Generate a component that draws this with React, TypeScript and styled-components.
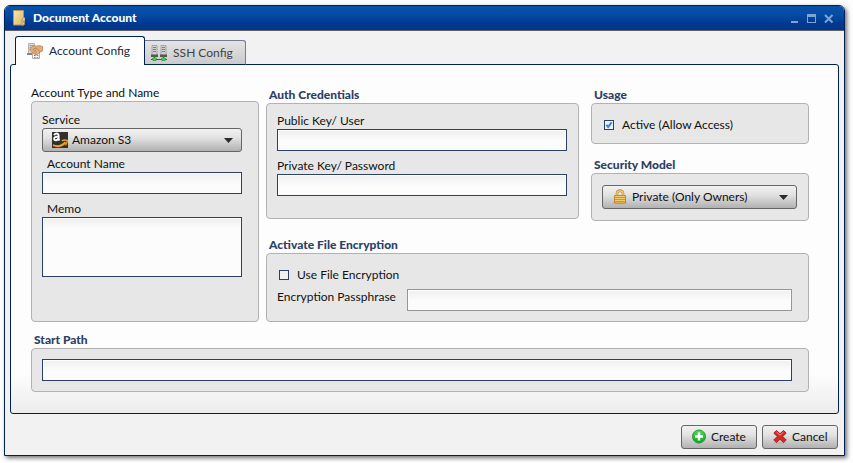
import React, { useState } from 'react';
import styled, { createGlobalStyle, css } from 'styled-components';

const navy = '#001f52';
const slate = '#2c4066';

const GlobalStyle = createGlobalStyle`
  * { box-sizing: border-box; }
  body {
    margin: 0;
    background: #fdfdfd;
    color: #111;
    font: 12px/16px Lato, "Noto Sans", sans-serif;
  }
  button, input, select, textarea { font: inherit; color: inherit; margin: 0; }
`;

const Page = styled.div`
  padding: 5px 8px 6px 4px;
`;

const Dialog = styled.main`
  border: 1px solid ${navy};
  border-radius: 6px 6px 0 0;
  background: #f2f2f2;
  box-shadow: 2px 2px 4px rgba(0, 0, 0, 0.55);
`;

const TitleBar = styled.header`
  display: flex;
  align-items: center;
  gap: 6px;
  height: 25px;
  padding: 0 9px 0 6px;
  border-bottom: 1px solid #5d6266;
  border-radius: 5px 5px 0 0;
  background: linear-gradient(#0850a8 0%, #054ca6 35%, #003a91 70%, #003489 100%);
`;

const Title = styled.h1`
  flex: 1;
  margin: 0;
  color: #fff;
  font-size: 12px;
  line-height: 16px;
  font-weight: 900;
`;

const WindowControls = styled.div`
  display: flex;
  gap: 5px;
`;

const WindowButton = styled.button`
  display: flex;
  width: 12px;
  height: 12px;
  padding: 0;
  border: 0;
  background: none;
  color: #83a3d3;
`;

const TabList = styled.div`
  display: flex;
  align-items: flex-end;
  padding: 5px 10px 0;
`;

const Tab = styled.button<{ $active?: boolean }>`
  display: flex;
  align-items: center;
  gap: 6px;
  height: 25px;
  padding: 0 12px 0 6px;
  border: 1px solid #747b92;
  border-left: 0;
  border-bottom-color: ${navy};
  border-radius: 0 3px 0 0;
  background: linear-gradient(#e3e3e3, #cbcbcb);
  color: #3d3f4b;
  ${(p) =>
    p.$active &&
    css`
      position: relative;
      z-index: 1;
      height: 29px;
      padding: 0 14px 0 11px;
      border: solid ${navy};
      border-width: 1px 1px 0;
      border-radius: 3px 3px 0 0;
      background: #fdfdfd;
      color: #222b40;
    `}
`;

const TabPanel = styled.div`
  display: flex;
  flex-direction: column;
  gap: 10px;
  margin: -1px 5px 0;
  padding: 20px 29px 21px 20px;
  border: 1px solid ${navy};
  border-radius: 3px;
  background: linear-gradient(#fdfdfd calc(100% - 40px), #ececec);
`;

const Columns = styled.div`
  display: grid;
  grid-template-columns: 228fr 543fr;
  gap: 7px;
`;

const Stack = styled.div<{ $gap: number; $top?: number }>`
  display: flex;
  flex-direction: column;
  gap: ${(p) => p.$gap}px;
  padding-top: ${(p) => p.$top ?? 0}px;
`;

const AccessRow = styled.div`
  display: grid;
  grid-template-columns: 313fr 218fr;
  align-items: start;
  gap: 12px;
`;

const Section = styled.section`
  display: flex;
  flex-direction: column;
`;

const SectionTitle = styled.h2<{ $plain?: boolean }>`
  margin: 0;
  padding-left: ${(p) => (p.$plain ? 0 : 3)}px;
  color: ${(p) => (p.$plain ? '#111' : slate)};
  font-size: 12px;
  line-height: 16px;
  font-weight: ${(p) => (p.$plain ? 400 : 900)};
`;

const Box = styled.div<{ $pad: string; $gap?: number }>`
  flex: 1;
  display: flex;
  flex-direction: column;
  gap: ${(p) => p.$gap ?? 0}px;
  padding: ${(p) => p.$pad};
  border: 1px solid #b2b2b2;
  border-radius: 4px;
  background: #e7e7e7;
`;

const Field = styled.div`
  display: flex;
  flex-direction: column;
`;

const FieldLabel = styled.label<{ $indent?: boolean }>`
  padding-left: ${(p) => (p.$indent ? 5 : 0)}px;
`;

const entry = css`
  width: 100%;
  border: 1px solid ${slate};
  border-radius: 0;
  outline: 0;
  background: linear-gradient(#efefef, #fcfcfc 11px);
  box-shadow: inset 0 0 0 1px #fdfdfd;
`;

const TextInput = styled.input<{ $muted?: boolean }>`
  ${entry}
  height: 22px;
  padding: 0 4px;
  ${(p) => p.$muted && css`border-color: #969696;`}
`;

const TextArea = styled.textarea`
  ${entry}
  height: 60px;
  padding: 2px 4px;
  resize: none;
`;

const InlineField = styled.div`
  display: flex;
  align-items: flex-start;
  gap: 11px;
`;

const CheckLabel = styled.label`
  display: flex;
  align-items: center;
  gap: 8px;
`;

const Checkbox = styled.input`
  appearance: none;
  width: 10px;
  height: 10px;
  margin-left: 2px;
  border: 1px solid ${slate};
  background: #f0f0f0;
  &:checked {
    background: #f0f0f0
      url("data:image/svg+xml,%3Csvg xmlns='http://www.w3.org/2000/svg' viewBox='0 0 8 8'%3E%3Cpath d='M1.3 3.8 3.2 6 6.6 1.4' fill='none' stroke='%232b86dc' stroke-width='2'/%3E%3C/svg%3E");
  }
`;

const raised = css`
  height: 24px;
  border: 1px solid #666;
  border-radius: 3px;
  background: linear-gradient(#f1f1f1, #e2e2e2 40%, #b1b1b1);
`;

const SelectFrame = styled.div`
  position: relative;
  display: grid;
`;

const Select = styled.select`
  ${raised}
  appearance: none;
  width: 100%;
  padding: 0 24px 0 29px;
`;

const SelectIcon = styled.span`
  position: absolute;
  left: 10px;
  top: 4px;
  display: flex;
  pointer-events: none;
`;

const SelectArrow = styled.svg`
  position: absolute;
  right: 9px;
  top: 10px;
  pointer-events: none;
`;

const Footer = styled.footer`
  display: flex;
  justify-content: flex-end;
  gap: 5px;
  padding: 11px 6px 6px;
`;

const ActionButton = styled.button`
  ${raised}
  display: flex;
  align-items: center;
  gap: 4px;
  min-width: 76px;
  padding: 0 9px;
`;

const FolderIcon = () => (
  <svg width="16" height="16" viewBox="0 0 16 16" aria-hidden="true">
    <defs>
      <linearGradient id="folder" x2="1" y2="1">
        <stop stopColor="#f8e7ab" />
        <stop offset="1" stopColor="#dcb865" />
      </linearGradient>
    </defs>
    <path d="M2.500 .5h10v14.500h-10z" fill="url(#folder)" stroke="#b89550" />
    <path d="M11 9l2.500-1.500v7L11 15.500z" fill="#e8cd86" stroke="#b18d46" strokeWidth=".7" />
    <path d="M12.300 9v4" stroke="#62a9d9" />
    <path d="M13 8v2.500" stroke="#fff" strokeWidth=".8" />
  </svg>
);

const AccountIcon = () => (
  <svg width="16" height="16" viewBox="0 0 16 16" aria-hidden="true">
    <path d="M1.500 .5h6v10h-6z" fill="#dcdcdc" stroke="#b4b4b4" />
    <path d="M2.500 2.500h4M2.500 4.500h4M2.500 6.500h3" stroke="#a2a2a2" />
    <path d="M0 10h6v2H0z" fill="#858585" />
    <path d="M5.500 8.500h7v7h-7z" fill="#f7f7f8" stroke="#b0b0b4" />
    <path d="M7 12.500h1.500" stroke="#d4503c" />
    <path d="M7 14.500h1.500" stroke="#4aa54a" />
    <path d="M9.500 12.500h2M9.500 14.500h2" stroke="#999" />
    <path d="M3.500 4.500 7 2.500l2.500 .7 2.500-.7 3.500 1v4.500l-2.500 1-2.500 2.500H8L4.500 9 3 7.500z" fill="#e3ae7c" stroke="#b98454" strokeWidth=".8" />
    <path d="M5.500 6.800 9 4.800l4 3.700M6.500 8.700 9 7.200M8 10.500l1.700-1.500" fill="none" stroke="#a5713f" strokeWidth=".7" />
  </svg>
);

const ServersIcon = () => (
  <svg width="16" height="16" viewBox="0 0 16 16" aria-hidden="true">
    {[0, 9].map((x) => (
      <g key={x}>
        <path d={`M${x + 1} .5h5v10h-5z`} fill="#d2d2d2" stroke="#999" strokeWidth=".8" />
        <path d={`M${x + 2} 2.500h3M${x + 2} 4.500h3M${x + 2} 6.500h3`} stroke="#808080" />
        <path d={`M${x} 9.500h7v2.500H${x}z`} fill="#555" />
        <path d={`M${x + 3.5} 11v3`} stroke="#2e8b35" />
      </g>
    ))}
    <path d="M0 14.500h16" stroke="#197c23" />
    <ellipse cx="3.500" cy="14.200" rx="2.200" ry="1.500" fill="#45d64d" stroke="#167321" strokeWidth=".6" />
    <ellipse cx="12.500" cy="14.200" rx="2.200" ry="1.500" fill="#45d64d" stroke="#167321" strokeWidth=".6" />
  </svg>
);

const AmazonIcon = () => (
  <svg width="16" height="16" viewBox="0 0 16 16" aria-hidden="true">
    <path d="M0 0h16v16H0z" fill="#303030" />
    <path d="M2.200 3.300C2.700 1 6.600 .9 6.600 3.400V7.300l.9 1.200M6.300 4.700C3.200 4.500 1.800 5.500 2.100 7.100c.4 1.900 3.600 1.500 4.300-.7" fill="none" stroke="#fff" strokeWidth="1.900" />
    <path d="M1 13.200c4.500 2 9 .8 12.600-3" fill="none" stroke="#f3a12a" strokeWidth="2" />
    <path d="M9.800 8.800c1.700-.9 3.500-1 5.400-.4.200 1.800-.4 3.500-1.700 5" fill="none" stroke="#f3a12a" strokeWidth="1.300" />
  </svg>
);

const LockIcon = () => (
  <svg width="16" height="16" viewBox="0 0 16 16" aria-hidden="true">
    <ellipse cx="8" cy="14" rx="7.500" ry="1.200" fill="#aaa" />
    <path d="M5 7V4.500C5 .7 11 .7 11 4.500V7" fill="none" stroke="#b88933" strokeWidth="2.600" />
    <path d="M5 7V4.500C5 .9 11 .9 11 4.500V7" fill="none" stroke="#f5d588" strokeWidth="1.200" />
    <path d="M2.500 6.500h11v7.500h-11z" fill="#f2cb6c" stroke="#bd8b35" />
    <path d="M3 8.500h10M3 10.500h10M3 12.500h10" stroke="#c89537" />
  </svg>
);

const PlusIcon = () => (
  <svg width="16" height="16" viewBox="0 0 16 16" aria-hidden="true">
    <defs>
      <linearGradient id="plus" x2="0" y2="1">
        <stop stopColor="#59d760" />
        <stop offset="1" stopColor="#0ca321" />
      </linearGradient>
    </defs>
    <circle cx="8" cy="7.500" r="6.500" fill="url(#plus)" stroke="#1c9b2a" />
    <path d="M8 3.500v8M4 7.500h8" stroke="#fff" strokeWidth="2.400" />
  </svg>
);

const CrossIcon = () => (
  <svg width="16" height="16" viewBox="0 0 16 16" aria-hidden="true">
    <ellipse cx="8" cy="14" rx="6.500" ry="1" fill="#b5b5b5" />
    <path d="M4.500 1.500 8 4.700l3.500-3.200 2.700 2.500-3.400 3.500 3.400 3.500-2.700 2.500L8 10.300l-3.500 3.200L1.800 11l3.400-3.500L1.800 4z" fill="#d52a2a" stroke="#a71919" strokeWidth=".9" />
    <path d="M4.500 3 8 6.200 11.500 3" fill="none" stroke="#ef8b83" />
  </svg>
);

type PickerProps = { id: string; label?: string; icon: React.ReactNode; options: string[] };

const Picker = ({ id, label, icon, options }: PickerProps) => (
  <SelectFrame>
    <Select id={id} aria-label={label}>
      {options.map((o) => (
        <option key={o}>{o}</option>
      ))}
    </Select>
    <SelectIcon>{icon}</SelectIcon>
    <SelectArrow width="9" height="5" viewBox="0 0 9 5" aria-hidden="true">
      <path d="M0 0h9L4.500 5z" fill="#2b2b2b" />
    </SelectArrow>
  </SelectFrame>
);

export default function App() {
  const [active, setActive] = useState(true);
  const [encrypt, setEncrypt] = useState(false);

  return (
    <Page>
      <GlobalStyle />
      <Dialog>
        <TitleBar>
          <FolderIcon />
          <Title>Document Account</Title>
          <WindowControls>
            <WindowButton type="button" aria-label="Minimize">
              <svg width="12" height="12" viewBox="0 0 12 12">
                <path d="M2 9h7v2H2z" fill="currentColor" />
              </svg>
            </WindowButton>
            <WindowButton type="button" aria-label="Maximize">
              <svg width="12" height="12" viewBox="0 0 12 12">
                <path d="M1 2h9v9H1zM2 5v5h7V5z" fill="currentColor" fillRule="evenodd" />
              </svg>
            </WindowButton>
            <WindowButton type="button" aria-label="Close">
              <svg width="12" height="12" viewBox="0 0 12 12">
                <path d="m2 3 7.500 7.500M9.500 3 2 10.500" stroke="currentColor" strokeWidth="2" />
              </svg>
            </WindowButton>
          </WindowControls>
        </TitleBar>

        <TabList role="tablist">
          <Tab type="button" role="tab" aria-selected="true" $active>
            <AccountIcon />
            Account Config
          </Tab>
          <Tab type="button" role="tab" aria-selected="false">
            <ServersIcon />
            SSH Config
          </Tab>
        </TabList>

        <TabPanel role="tabpanel">
          <Columns>
            <Section>
              <SectionTitle $plain>Account Type and Name</SectionTitle>
              <Box $pad="10px 16px 10px 10px">
                <Stack $gap={4}>
                  <Field>
                    <FieldLabel htmlFor="service">Service</FieldLabel>
                    <Picker id="service" icon={<AmazonIcon />} options={['Amazon S3']} />
                  </Field>
                  <Stack $gap={7}>
                    <Field>
                      <FieldLabel htmlFor="name" $indent>Account Name</FieldLabel>
                      <TextInput id="name" />
                    </Field>
                    <Field>
                      <FieldLabel htmlFor="memo" $indent>Memo</FieldLabel>
                      <TextArea id="memo" />
                    </Field>
                  </Stack>
                </Stack>
              </Box>
            </Section>

            <Stack $gap={16} $top={2}>
              <AccessRow>
                <Section>
                  <SectionTitle>Auth Credentials</SectionTitle>
                  <Box $pad="9px 11px 22px 10px" $gap={7}>
                    <Field>
                      <FieldLabel htmlFor="public">Public Key/ User</FieldLabel>
                      <TextInput id="public" />
                    </Field>
                    <Field>
                      <FieldLabel htmlFor="private">Private Key/ Password</FieldLabel>
                      <TextInput id="private" />
                    </Field>
                  </Box>
                </Section>
                <Stack $gap={13}>
                  <Section>
                    <SectionTitle>Usage</SectionTitle>
                    <Box $pad="13px 11px 10px 10px">
                      <CheckLabel>
                        <Checkbox type="checkbox" checked={active} onChange={() => setActive(!active)} />
                        Active (Allow Access)
                      </CheckLabel>
                    </Box>
                  </Section>
                  <Section>
                    <SectionTitle>Security Model</SectionTitle>
                    <Box $pad="11px 11px 11px 10px">
                      <Picker id="security" label="Security Model" icon={<LockIcon />} options={['Private (Only Owners)']} />
                    </Box>
                  </Section>
                </Stack>
              </AccessRow>

              <Section>
                <SectionTitle>Activate File Encryption</SectionTitle>
                <Box $pad="13px 16px 10px 10px" $gap={6}>
                  <CheckLabel>
                    <Checkbox type="checkbox" checked={encrypt} onChange={() => setEncrypt(!encrypt)} />
                    Use File Encryption
                  </CheckLabel>
                  <InlineField>
                    <FieldLabel htmlFor="phrase">Encryption&nbsp;Passphrase</FieldLabel>
                    <TextInput id="phrase" $muted />
                  </InlineField>
                </Box>
              </Section>
            </Stack>
          </Columns>

          <Section>
            <SectionTitle>Start Path</SectionTitle>
            <Box $pad="10px 16px 10px 10px">
              <TextInput aria-label="Start Path" />
            </Box>
          </Section>
        </TabPanel>

        <Footer>
          <ActionButton type="button">
            <PlusIcon />
            Create
          </ActionButton>
          <ActionButton type="button">
            <CrossIcon />
            Cancel
          </ActionButton>
        </Footer>
      </Dialog>
    </Page>
  );
}
